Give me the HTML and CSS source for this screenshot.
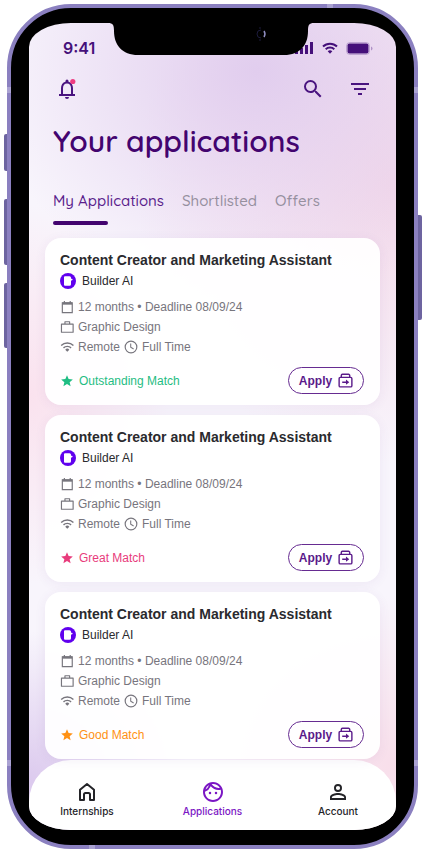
FILE: index.html
```html
<!DOCTYPE html>
<html lang="en">
<head>
<meta charset="utf-8">
<meta name="viewport" content="width=device-width, initial-scale=1">
<title>Your applications</title>
<link rel="stylesheet" href="styles.css">
</head>
<body>
<svg class="sprite" aria-hidden="true">
  <symbol id="calendar" viewBox="0 0 24 24"><path d="M4 5h17v16.500H4zM7.500 1.500V5M17.500 1.500V5" fill="none" stroke="currentColor" stroke-width="2"/><path d="M4 4h17v4H4z" fill="currentColor"/></symbol>
  <symbol id="briefcase" viewBox="0 0 24 24"><path d="M2.500 7h20v14h-20zM8.500 7V3h8v4" fill="none" stroke="currentColor" stroke-width="2" stroke-linejoin="round"/></symbol>
  <symbol id="wifi" viewBox="0 0 24 24"><path d="M2 9.500a15 15 0 0 1 21 0M6 13.500a9.300 9.300 0 0 1 13 0" fill="none" stroke="currentColor" stroke-width="2.400"/><path d="M9 16.500a5 5 0 0 1 7 0L12.500 20z" fill="currentColor"/></symbol>
  <symbol id="clock" viewBox="0 0 24 24"><circle cx="12" cy="12" r="10" fill="none" stroke="currentColor" stroke-width="2"/><path d="M11.500 6v6.500l5 3" fill="none" stroke="currentColor" stroke-width="1.800"/></symbol>
  <symbol id="star" viewBox="0 0 24 24"><path d="M12 17.270 18.180 21l-1.640-7.030L22 9.240l-7.190-.61L12 2 9.190 8.630 2 9.240l5.460 4.730L5.820 21z" fill="currentColor"/></symbol>
  <symbol id="send" viewBox="0 0 16 16"><path d="M2.500 4.700h11a1.300 1.300 0 0 1 1.300 1.300v7.500a1.300 1.300 0 0 1-1.300 1.300h-11a1.300 1.300 0 0 1-1.300-1.300V6a1.300 1.300 0 0 1 1.300-1.300zM3.500 4.700V2.600a1.200 1.200 0 0 1 1.200-1.200h6.600a1.200 1.200 0 0 1 1.200 1.200v2.100" fill="none" stroke="currentColor" stroke-width="1.500"/><path d="M4.500 9h4V7l3.500 2.800-3.500 2.800v-2h-4z" fill="currentColor"/></symbol>
  <symbol id="builder" viewBox="0 0 16 16"><circle cx="8" cy="8" r="8" fill="#6000ee"/><path d="M4 4.300q0-1 1-1h4.500q1.500 0 1.500 1.500v1h.8q.8 0 .8.800t-.8.800H11v3.800q0 1.500-1.500 1.500H5q-1 0-1-1z" fill="#fff"/></symbol>
</svg>

<div class="phone">
  <span class="key key-silent"></span>
  <span class="key key-up"></span>
  <span class="key key-down"></span>
  <span class="key key-power"></span>
  <span class="band band-top"></span>
  <span class="band band-bottom"></span>
  <span class="band band-left"></span>
  <span class="band band-right"></span>
  <span class="band band-left band-low"></span>
  <span class="band band-right band-low"></span>

  <div class="screen">
    <svg class="notch" viewBox="0 0 206 32" aria-hidden="true"><path d="M0 0c5 0 6 2 6 8 0 14 8 24 24 24h146c16 0 24-10 24-24 0-6 1-8 6-8z"/><path d="M153 7a4 4 0 0 0 0 8M152 4v2M152 16v2" fill="none" stroke="#1c1b3c"/><path d="M156 8q2 3 0 6" fill="none" stroke="#8f8dc0" stroke-width="1.500"/></svg>

    <div class="status">
      <span class="time">9:41</span>
      <span class="signals">
        <svg width="20" height="12" viewBox="0 0 20 12"><path d="M1 8h3v4H1zM6 6h3v6H6zM11 3h3v9h-3zM16 0h3v12h-3z" fill="currentColor"/></svg>
        <svg width="16" height="12" viewBox="0 0 16 12"><path d="M1 4.500a10 10 0 0 1 14 0M3.700 7.300a6.200 6.200 0 0 1 8.600 0" fill="none" stroke="currentColor" stroke-width="2"/><path d="M5.700 9.300a3.300 3.300 0 0 1 4.600 0L8 11.700z" fill="currentColor"/></svg>
        <svg width="27" height="13" viewBox="0 0 27 13"><rect x=".5" y=".5" width="23" height="12" rx="3.500" fill="none" stroke="currentColor" opacity=".25"/><rect x="1.500" y="1.500" width="21" height="10" rx="2" fill="currentColor"/><path d="M25 4.500v4q1.500-.5 1.500-2t-1.500-2" fill="currentColor" opacity=".35"/></svg>
      </span>
    </div>

    <div class="toolbar">
      <button class="tool" type="button" aria-label="Notifications">
        <svg viewBox="0 0 24 24"><path d="M12 22a2 2 0 0 0 2-2h-4a2 2 0 0 0 2 2zm6-5v-6c0-3.070-1.640-5.640-4.500-6.320V4a1.500 1.500 0 0 0-3 0v.68C7.630 5.360 6 7.920 6 11v6H4v2h16v-2zm-2 0H8v-6c0-2.480 1.510-4.500 4-4.500s4 2.020 4 4.500z" fill="currentColor"/><circle cx="17.800" cy="4.500" r="2.600" fill="#ee3c81"/></svg>
      </button>
      <div class="tools">
        <button class="tool" type="button" aria-label="Search">
          <svg viewBox="0 0 24 24"><path d="M15.500 14h-.79l-.28-.27A6.470 6.470 0 0 0 16 9.500 6.500 6.500 0 1 0 9.500 16c1.610 0 3.090-.59 4.230-1.570l.27.28v.79l5 4.990L20.490 19zm-6 0a4.500 4.500 0 1 1 0-9 4.500 4.500 0 0 1 0 9z" fill="currentColor"/></svg>
        </button>
        <button class="tool" type="button" aria-label="Filter">
          <svg viewBox="0 0 24 24"><path d="M10 18h4v-2h-4zM3 6v2h18V6zm3 7h12v-2H6z" fill="currentColor"/></svg>
        </button>
      </div>
    </div>

    <h1>Your applications</h1>

    <div class="tabs" role="tablist">
      <button class="tab active" type="button" role="tab" aria-selected="true">My Applications</button>
      <button class="tab" type="button" role="tab" aria-selected="false">Shortlisted</button>
      <button class="tab" type="button" role="tab" aria-selected="false">Offers</button>
    </div>

    <main class="cards">
      <article class="card">
        <h2>Content Creator and Marketing Assistant</h2>
        <p class="company"><svg><use href="#builder"/></svg>Builder AI</p>
        <ul class="details">
          <li><svg><use href="#calendar"/></svg>12 months • Deadline 08/09/24</li>
          <li><svg><use href="#briefcase"/></svg>Graphic Design</li>
          <li><svg><use href="#wifi"/></svg>Remote <svg><use href="#clock"/></svg>Full Time</li>
        </ul>
        <div class="foot">
          <span class="match outstanding"><svg><use href="#star"/></svg>Outstanding Match</span>
          <button class="apply" type="button">Apply<svg><use href="#send"/></svg></button>
        </div>
      </article>

      <article class="card">
        <h2>Content Creator and Marketing Assistant</h2>
        <p class="company"><svg><use href="#builder"/></svg>Builder AI</p>
        <ul class="details">
          <li><svg><use href="#calendar"/></svg>12 months • Deadline 08/09/24</li>
          <li><svg><use href="#briefcase"/></svg>Graphic Design</li>
          <li><svg><use href="#wifi"/></svg>Remote <svg><use href="#clock"/></svg>Full Time</li>
        </ul>
        <div class="foot">
          <span class="match great"><svg><use href="#star"/></svg>Great Match</span>
          <button class="apply" type="button">Apply<svg><use href="#send"/></svg></button>
        </div>
      </article>

      <article class="card">
        <h2>Content Creator and Marketing Assistant</h2>
        <p class="company"><svg><use href="#builder"/></svg>Builder AI</p>
        <ul class="details">
          <li><svg><use href="#calendar"/></svg>12 months • Deadline 08/09/24</li>
          <li><svg><use href="#briefcase"/></svg>Graphic Design</li>
          <li><svg><use href="#wifi"/></svg>Remote <svg><use href="#clock"/></svg>Full Time</li>
        </ul>
        <div class="foot">
          <span class="match good"><svg><use href="#star"/></svg>Good Match</span>
          <button class="apply" type="button">Apply<svg><use href="#send"/></svg></button>
        </div>
      </article>
    </main>

    <nav class="nav">
      <a href="#internships">
        <svg viewBox="0 0 24 24"><path d="M5 20V9.800L12 4l7 5.800V20h-4v-5.500a1.500 1.500 0 0 0-1.500-1.500h-3A1.500 1.500 0 0 0 9 14.500V20z" fill="none" stroke="currentColor" stroke-width="2" stroke-linejoin="round"/></svg>
        Internships
      </a>
      <a class="current" href="#applications" aria-current="page">
        <svg viewBox="0 0 24 24"><path d="M10.250 13a1.250 1.250 0 1 1-2.500 0 1.250 1.250 0 0 1 2.500 0zM15 11.750a1.250 1.250 0 1 0 0 2.500 1.250 1.250 0 0 0 0-2.500zM22 12c0 5.520-4.480 10-10 10S2 17.520 2 12 6.480 2 12 2s10 4.480 10 10zM10.660 4.120C12.060 6.440 14.600 8 17.500 8c.46 0 .91-.05 1.340-.12C17.440 5.560 14.900 4 12 4c-.46 0-.91.05-1.340.12zM4.420 9.470a8.050 8.050 0 0 0 3.660-4.440 8.050 8.050 0 0 0-3.660 4.440zM20 12c0-.78-.12-1.530-.33-2.240-.7.15-1.420.24-2.170.24a10 10 0 0 1-7.760-3.690A10.020 10.020 0 0 1 4 11.860V12c0 4.410 3.590 8 8 8s8-3.590 8-8z" fill="currentColor" fill-rule="evenodd"/></svg>
        Applications
      </a>
      <a href="#account">
        <svg viewBox="0 0 24 24"><path d="M12 5.900a2.100 2.100 0 1 1 0 4.200 2.100 2.100 0 0 1 0-4.200m0 9c2.970 0 6.100 1.460 6.100 2.100v1.100H5.900V17c0-.64 3.130-2.100 6.100-2.100M12 4a4 4 0 1 0 0 8 4 4 0 0 0 0-8m0 9c-2.670 0-8 1.340-8 4v3h16v-3c0-2.660-5.330-4-8-4z" fill="currentColor"/></svg>
        Account
      </a>
    </nav>
  </div>
</div>
</body>
</html>
```
FILE: styles.css
```css
* {
  box-sizing: border-box;
}

body {
  margin: 0;
  padding: 4px 8px 3px 7px;
  background: #fff;
  font-family: "Helvetica Neue", "Liberation Sans", Arial, sans-serif;
  color: #2a2a2e;
}

h1, h2, p, ul {
  margin: 0;
  padding: 0;
}

button {
  padding: 0;
  border: 0;
  background: none;
  color: inherit;
  font: inherit;
}

.sprite {
  position: absolute;
  width: 0;
  height: 0;
}

/* Device frame */

.phone {
  position: relative;
  padding: 15px 18px;
  border: 4px solid #8b80c0;
  border-radius: 64px;
  background: #000;
}

.key {
  position: absolute;
  left: -7px;
  width: 3px;
  border-radius: 2px 0 0 2px;
  background: #6d64a0;
}

.key-silent { top: 126px; height: 37px; }
.key-up { top: 191px; height: 66px; }
.key-down { top: 275px; height: 65px; }

.key-power {
  top: 207px;
  right: -8px;
  left: auto;
  width: 4px;
  height: 105px;
  border-radius: 0 2px 2px 0;
}

.band {
  position: absolute;
  width: 4px;
  height: 6px;
  background: #aaa2d2;
}

.band-top { top: -4px; right: 81px; width: 6px; height: 4px; }
.band-bottom { bottom: -4px; left: 78px; width: 6px; height: 4px; }
.band-left { left: -4px; top: 79px; }
.band-right { right: -4px; top: 79px; }
.band-low { top: auto; bottom: 79px; }

.screen {
  position: relative;
  overflow: hidden;
  border-radius: 42px / 24px;
  background:
    radial-gradient(ellipse 270px 230px at 62% 6%, #e1cdee 0%, #e1cdee00 100%),
    radial-gradient(ellipse 260px 280px at 100% 20%, #f4d9e9 0%, #f4d9e900 100%),
    radial-gradient(ellipse 140px 190px at 0% 46%, #fae2ee 0%, #fae2ee00 100%),
    radial-gradient(ellipse 160px 150px at 0% 94%, #dccaee 0%, #dccaee00 100%),
    radial-gradient(ellipse 200px 170px at 100% 92%, #f8deea 0%, #f8deea00 100%),
    #f8f5fc;
}

.notch {
  position: absolute;
  z-index: 2;
  top: 0;
  left: 50%;
  width: 206px;
  height: 32px;
  margin-left: -105px;
}

/* Header */

.status {
  display: flex;
  align-items: center;
  justify-content: space-between;
  height: 50px;
  padding: 0 23px 0 34px;
  color: #45107a;
}

.time {
  font: 600 16px/20px Inter, sans-serif;
}

.signals {
  display: flex;
  align-items: center;
  gap: 8px;
}

.toolbar {
  display: flex;
  justify-content: space-between;
  padding: 4px 24px 0 26px;
  color: #4a1480;
}

.tools {
  display: flex;
  gap: 23px;
}

.tool {
  width: 24px;
  height: 24px;
}

.tool svg {
  display: block;
  width: 24px;
  height: 24px;
}

h1 {
  padding: 20px 24px 0;
  color: #43046f;
  font: 600 30px/40px Quicksand, Lato, sans-serif;
}

.tabs {
  display: flex;
  align-items: flex-start;
  gap: 18px;
  height: 64px;
  padding: 28px 24px 0;
}

.tab {
  color: #96909f;
  font: 500 15px/24px Quicksand, Lato, sans-serif;
  text-align: left;
}

.tab.active {
  color: #5a1e8c;
}

.tab.active::after {
  content: "";
  display: block;
  width: 50%;
  height: 4px;
  margin-top: 8px;
  border-radius: 2px;
  background: #43046f;
}

/* Application cards */

.cards {
  display: grid;
  gap: 10px;
  padding: 13px 16px 1px;
}

.card {
  padding: 12px 16px 11px 15px;
  border-radius: 16px;
  background: #fffffff0;
  box-shadow: 0 2px 12px #64328c12;
}

.card h2 {
  font-size: 14px;
  font-weight: 700;
  line-height: 20px;
  white-space: nowrap;
}

.company,
.details li,
.match,
.apply {
  display: flex;
  align-items: center;
  font-size: 12px;
}

.company {
  gap: 6px;
  height: 22px;
}

.company svg {
  width: 16px;
  height: 16px;
}

.details {
  margin-top: 5px;
  color: #77757d;
  list-style: none;
}

.details li {
  gap: 4px;
  height: 20px;
}

.details svg,
.match svg {
  width: 14px;
  height: 14px;
}

.foot {
  display: flex;
  align-items: center;
  justify-content: space-between;
  margin-top: 10px;
}

.match {
  gap: 5px;
}

.outstanding { color: #1fbd83; }
.great { color: #e83c7c; }
.good { color: #ff9114; }

.apply {
  justify-content: center;
  gap: 6px;
  width: 76px;
  height: 27px;
  border: 1px solid #662b91;
  border-radius: 14px;
  color: #5a1a8a;
  font-weight: 700;
}

.apply svg {
  width: 15px;
  height: 15px;
}

/* Bottom navigation */

.nav {
  display: flex;
  justify-content: space-between;
  padding: 20px 23px 11px;
  border-radius: 42px 42px 0 0;
  background: #fff;
}

.nav a {
  display: flex;
  flex-direction: column;
  align-items: center;
  width: 70px;
  color: #242428;
  font: 500 10px/15px Inter, sans-serif;
  text-decoration: none;
}

.nav svg {
  width: 24px;
  height: 24px;
}

.nav .current {
  color: #7b16c4;
}
```
